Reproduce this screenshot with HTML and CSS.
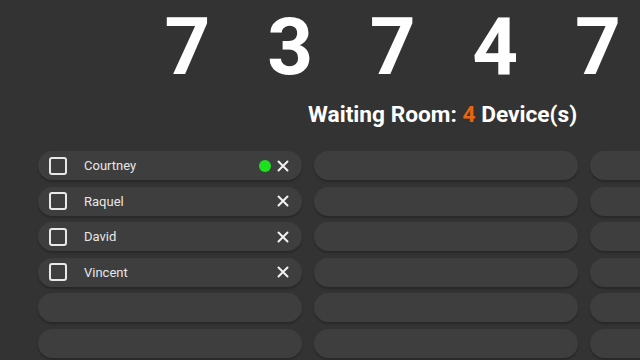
FILE: index.html
```html
<!DOCTYPE html>
<html lang="en">
<head>
  <meta charset="UTF-8">
  <meta name="viewport" content="width=device-width, initial-scale=1.0">
  <title>Waiting Room</title>
  <link rel="stylesheet" href="styles.css">
</head>
<body>
  <div class="screen">
    <!-- Room code -->
    <div class="code">
      <span class="digit">7</span>
      <span class="digit">3</span>
      <span class="digit">7</span>
      <span class="digit">4</span>
      <span class="digit">7</span>
    </div>

    <h1 class="title">Waiting Room: <span class="count">4</span> Device(s)</h1>

    <div class="devices">
      <!-- column 1 -->
      <div class="slot">
        <span class="check"></span>
        <span class="name">Courtney</span>
        <span class="online"></span>
        <svg class="remove" viewBox="0 0 12 12"><path d="M1.5 1.5 L10.5 10.5 M10.5 1.5 L1.5 10.5"/></svg>
      </div>
      <div class="slot"></div>
      <div class="slot"></div>

      <div class="slot">
        <span class="check"></span>
        <span class="name">Raquel</span>
        <svg class="remove" viewBox="0 0 12 12"><path d="M1.5 1.5 L10.5 10.5 M10.5 1.5 L1.5 10.5"/></svg>
      </div>
      <div class="slot"></div>
      <div class="slot"></div>

      <div class="slot">
        <span class="check"></span>
        <span class="name">David</span>
        <svg class="remove" viewBox="0 0 12 12"><path d="M1.5 1.5 L10.5 10.5 M10.5 1.5 L1.5 10.5"/></svg>
      </div>
      <div class="slot"></div>
      <div class="slot"></div>

      <div class="slot">
        <span class="check"></span>
        <span class="name">Vincent</span>
        <svg class="remove" viewBox="0 0 12 12"><path d="M1.5 1.5 L10.5 10.5 M10.5 1.5 L1.5 10.5"/></svg>
      </div>
      <div class="slot"></div>
      <div class="slot"></div>

      <div class="slot"></div>
      <div class="slot"></div>
      <div class="slot"></div>

      <div class="slot"></div>
      <div class="slot"></div>
      <div class="slot"></div>
    </div>
  </div>
</body>
</html>
```

FILE: styles.css
```css
/* General Styles */
html, body {
  margin: 0;
  padding: 0;
  background-color: #333333;
}

body {
  font-family: Roboto, "Liberation Sans", sans-serif;
  color: #ffffff;
  overflow: hidden;
}

.screen {
  width: 640px;
  height: 360px;
  overflow: hidden;
}

/* Room code */
.code {
  display: flex;
  gap: 22.6px;
  padding-left: 147.5px;
}

.digit {
  flex: 0 0 80px;
  text-align: center;
  font-size: 80px;
  font-weight: 700;
  line-height: normal;
}

.title {
  margin: 8px 0 0 0;
  padding-left: 308px;
  font-size: 22.7px;
  font-weight: 700;
  line-height: 26px;
  white-space: nowrap;
}

.count {
  color: #e8650f;
}

/* Device slots */
.devices {
  display: grid;
  grid-template-columns: repeat(3, 264px);
  grid-auto-rows: 29px;
  gap: 6.5px 12px;
  margin-top: 23px;
  padding-left: 38px;
}

.slot {
  display: flex;
  align-items: center;
  background-color: #3e3e3e;
  border-radius: 15px;
  box-shadow: 0 2px 2px rgba(0, 0, 0, 0.22);
  padding: 0 13px 0 11px;
}

.check {
  width: 14px;
  height: 14px;
  border: 2px solid #e8e8e8;
  border-radius: 3px;
  flex: none;
}

.name {
  margin-left: 17px;
  font-size: 13px;
  font-weight: 400;
  color: #e6e6e6;
  flex: 1;
}

.online {
  width: 12px;
  height: 12px;
  border-radius: 50%;
  background-color: #1fe01f;
  margin-right: 6px;
  flex: none;
}

.remove {
  width: 12px;
  height: 12px;
  flex: none;
}

.remove path {
  stroke: #f2f2f2;
  stroke-width: 2;
  stroke-linecap: round;
  fill: none;
}
```
